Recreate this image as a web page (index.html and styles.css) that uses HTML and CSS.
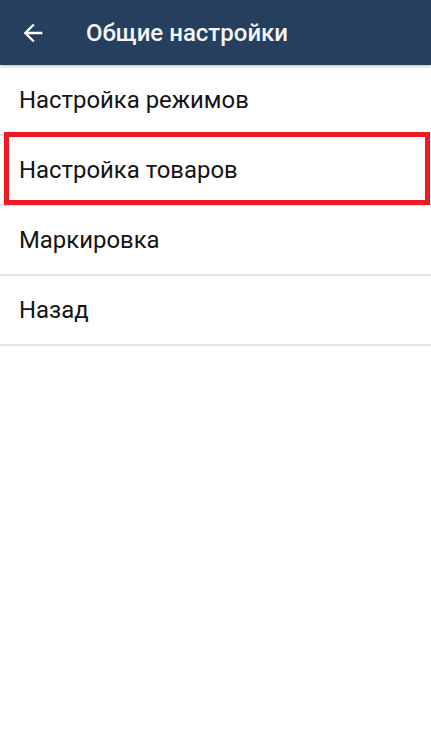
FILE: index.html
```html
<!DOCTYPE html>
<html lang="ru">
<head>
<meta charset="utf-8">
<title>Общие настройки</title>
<link rel="stylesheet" href="styles.css">
</head>
<body>
<header class="appbar">
  <span class="back">
    <svg width="28" height="28" viewBox="0 0 24 24"><path d="M20 11H7.83l5.59-5.59L12 4l-8 8 8 8 1.41-1.41L7.83 13H20v-2z" fill="#fff"/></svg>
  </span>
  <h1 class="title">Общие настройки</h1>
</header>
<ul class="menu">
  <li class="item">Настройка режимов</li>
  <li class="item selected">Настройка товаров</li>
  <li class="item">Маркировка</li>
  <li class="item">Назад</li>
</ul>
</body>
</html>
```
FILE: styles.css
```css
html, body {
  margin: 0;
  padding: 0;
  background: #fff;
}
body {
  font-family: Roboto, "Noto Sans", sans-serif;
  width: 431px;
  height: 738px;
  overflow: hidden;
}
.appbar {
  height: 65px;
  background: #263f5f;
  display: flex;
  align-items: center;
  box-shadow: 0 1px 3px rgba(0,0,0,0.3);
  position: relative;
  z-index: 1;
}
.back {
  width: 28px;
  height: 28px;
  margin-left: 19px;
  display: flex;
}
.title {
  margin: 0 0 0 39px;
  color: #f4f6f8;
  font-size: 24px;
  font-weight: 500;
}
.menu {
  list-style: none;
  margin: 0;
  padding: 1px 0 0;
}
.item {
  height: 68px;
  border-bottom: 2px solid #e3e3e3;
  display: flex;
  align-items: center;
  padding-left: 19px;
  font-size: 23.9px;
  color: #141414;
  position: relative;
}
.item.selected::after {
  content: "";
  position: absolute;
  top: -4px;
  bottom: -1px;
  left: 4px;
  right: 1px;
  border: 5px solid #ed1c24;
}
```
